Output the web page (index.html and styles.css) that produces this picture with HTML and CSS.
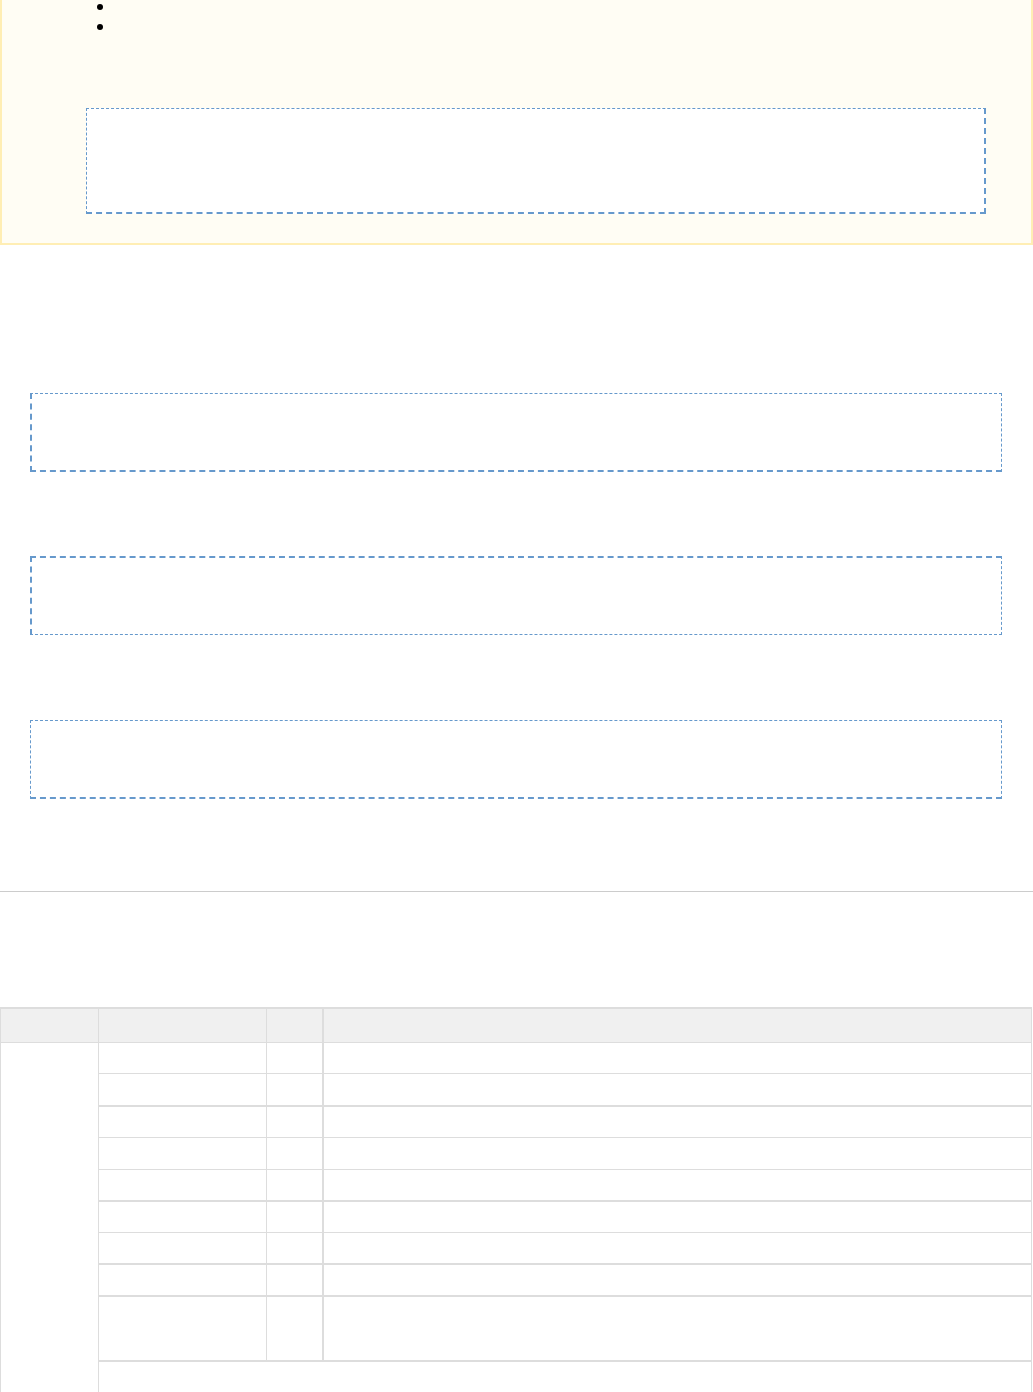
FILE: index.html
```html
<!DOCTYPE html>
<html lang="en">
<head>
  <meta charset="UTF-8">
  <meta name="viewport" content="width=device-width, initial-scale=1.0">
  <title>Page</title>
  <link rel="stylesheet" href="styles.css">
</head>
<body>

  <!-- Note panel -->
  <div class="note">
    <ul class="note-list">
      <li>&nbsp;</li>
      <li>&nbsp;</li>
    </ul>
    <div class="code-box code-box-first"></div>
  </div>

  <!-- Code blocks -->
  <div class="blocks">
    <div class="code-box block-a"></div>
    <div class="code-box block-b"></div>
    <div class="code-box block-c"></div>
  </div>

  <hr class="divider">

  <!-- Parameter table -->
  <table class="params">
    <thead>
      <tr>
        <th class="col-group"></th>
        <th class="col-name"></th>
        <th class="col-type"></th>
        <th class="col-desc"></th>
      </tr>
    </thead>
    <tbody>
      <tr>
        <td rowspan="11"></td>
        <td></td><td class="col-type"></td><td></td>
      </tr>
      <tr><td></td><td class="col-type"></td><td></td></tr>
      <tr class="thick"><td></td><td class="col-type"></td><td></td></tr>
      <tr><td></td><td class="col-type"></td><td></td></tr>
      <tr><td></td><td class="col-type"></td><td></td></tr>
      <tr class="thick"><td></td><td class="col-type"></td><td></td></tr>
      <tr><td></td><td class="col-type"></td><td></td></tr>
      <tr class="thick"><td></td><td class="col-type"></td><td></td></tr>
      <tr class="thick tall"><td></td><td class="col-type"></td><td></td></tr>
      <tr class="thick last"><td colspan="3"></td></tr>
    </tbody>
  </table>

</body>
</html>
```

FILE: styles.css
```css
* {
  box-sizing: border-box;
}

body {
  margin: 0;
  background-color: #fff;
  color: #000;
  font-family: "Liberation Sans", Arial, sans-serif;
  font-size: 13px;
}

/* Note panel */
.note {
  width: 1033px;
  background-color: #fffdf4;
  border: 2px solid #ffeeb4;
  border-top: none;
  padding: 0 45px 29px 84px;
}

.note-list {
  margin: -3px 0 0 0;
  padding-left: 0;
  list-style: none;
}

.note-list li {
  display: flex;
  align-items: center;
  height: 20px;
  padding-left: 11px;
}

.note-list li::before {
  content: "";
  width: 6px;
  height: 6px;
  border-radius: 50%;
  background-color: #000;
}

.code-box {
  background-color: #fff;
  border: 1px dashed #6699cc;
}

.code-box-first {
  margin-top: 71px;
  height: 106px;
  border-right-width: 2px;
  border-bottom-width: 2px;
}

/* Code blocks */
.blocks {
  display: flex;
  flex-direction: column;
  gap: 84px;
  padding: 148px 0 0 30px;
}

.blocks .code-box {
  width: 972px;
  height: 79px;
}

.block-a {
  border-bottom-width: 2px;
  border-left-width: 2px;
}

.block-b {
  border-top-width: 2px;
  border-left-width: 2px;
}

.block-c {
  margin-top: 1px;
  border-bottom-width: 2px;
}

.divider {
  margin: 92px 0 0 0;
  border: none;
  border-top: 1px solid #cccccc;
}

/* Parameter table */
.params {
  margin-top: 115px;
  width: 1032px;
  border-collapse: collapse;
  table-layout: fixed;
}

.params th, .params td {
  border: 1px solid #dddddd;
  padding: 0;
}

.params thead tr {
  height: 34px;
}

.params thead th {
  background-color: #f0f0f0;
  border-top-width: 2px;
}

.params tbody tr {
  height: 31.75px;
}

.params tbody tr.tall {
  height: 65px;
}

.params tbody tr.last {
  height: 31px;
}

.params tr.thick td {
  border-top-width: 2px;
}

.params .col-type {
  border-right-width: 2px;
}

.col-group { width: 98px; }
.col-name { width: 168px; }
.col-type { width: 56px; }
```
